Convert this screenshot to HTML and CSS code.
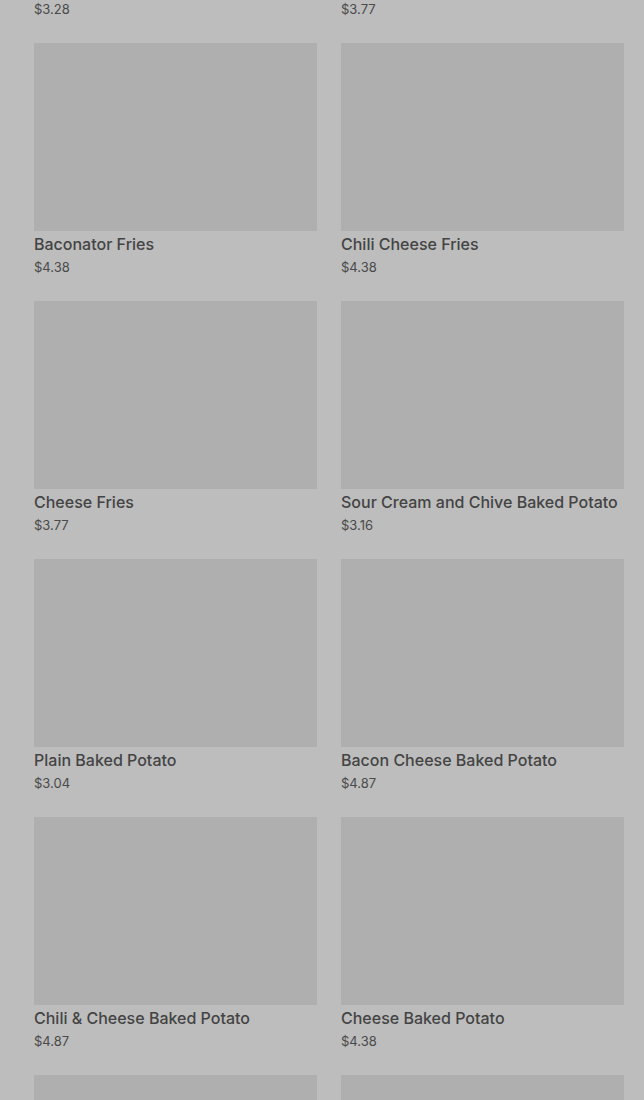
FILE: index.html
```html
<!DOCTYPE html>
<html lang="en">
<head>
	<meta charset="UTF-8" />
	<meta name="viewport" content="width=device-width, initial-scale=1.0" />
	<title>Menu</title>
	<link rel="stylesheet" href="styles.css">
</head>
<body>
	<div class="menu">
		<div class="item">
			<div class="pic"></div>
			<p class="name">Natural-Cut Fries</p>
			<p class="price">$3.28</p>
		</div>
		<div class="item">
			<div class="pic"></div>
			<p class="name">Frosty</p>
			<p class="price">$3.77</p>
		</div>
		<div class="item">
			<div class="pic"></div>
			<p class="name">Baconator Fries</p>
			<p class="price">$4.38</p>
		</div>
		<div class="item">
			<div class="pic"></div>
			<p class="name">Chili Cheese Fries</p>
			<p class="price">$4.38</p>
		</div>
		<div class="item">
			<div class="pic"></div>
			<p class="name">Cheese Fries</p>
			<p class="price">$3.77</p>
		</div>
		<div class="item">
			<div class="pic"></div>
			<p class="name">Sour Cream and Chive Baked Potato</p>
			<p class="price">$3.16</p>
		</div>
		<div class="item">
			<div class="pic"></div>
			<p class="name">Plain Baked Potato</p>
			<p class="price">$3.04</p>
		</div>
		<div class="item">
			<div class="pic"></div>
			<p class="name">Bacon Cheese Baked Potato</p>
			<p class="price">$4.87</p>
		</div>
		<div class="item">
			<div class="pic"></div>
			<p class="name">Chili &amp; Cheese Baked Potato</p>
			<p class="price">$4.87</p>
		</div>
		<div class="item">
			<div class="pic"></div>
			<p class="name">Cheese Baked Potato</p>
			<p class="price">$4.38</p>
		</div>
		<div class="item">
			<div class="pic"></div>
		</div>
		<div class="item">
			<div class="pic"></div>
		</div>
	</div>
</body>
</html>
```

FILE: styles.css
```css
html {
	background: #bdbdbd;
}

body {
	margin: 0;
	overflow: hidden;
	font-family: Inter, "Liberation Sans", sans-serif;
	color: #444444;
}

.menu {
	display: grid;
	grid-template-columns: 283px 283px;
	column-gap: 24px;
	row-gap: 25px;
	margin-top: -215px;
	padding: 0 20px 0 34px;
}

.pic {
	height: 188px;
	background: #afafaf;
}

.name {
	margin: 3px 0 0;
	font-size: 16px;
	font-weight: 500;
	line-height: 20px;
	white-space: nowrap;
}

.price {
	margin: 4px 0 0;
	font-size: 13px;
	line-height: 18px;
	color: #4a4a4a;
}
```
